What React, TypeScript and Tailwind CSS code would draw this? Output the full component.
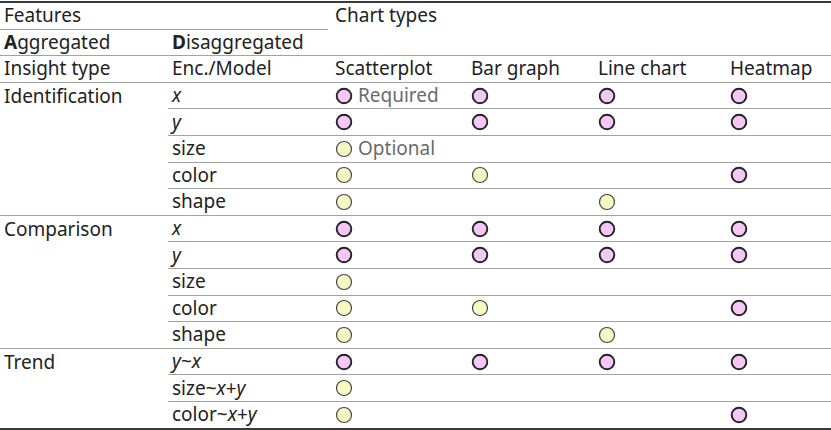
import React from "react";

type Mark = "p" | "y" | "" | "pr" | "yo";

const COLS = "grid grid-cols-[163px_136px_127px_132px_1fr]";

function Dot({ kind }: { kind: "p" | "y" }) {
  const pink = kind === "p";
  return (
    <svg width="18" height="18" viewBox="0 0 18 18" className="shrink-0">
      <circle
        cx="9"
        cy="9"
        r={pink ? 7.3 : 7.5}
        fill={pink ? "#f6c6f6" : "#f7f7c4"}
        stroke={pink ? "#222" : "#444"}
        strokeWidth={pink ? 1.9 : 1.2}
      />
    </svg>
  );
}

function MarkCell({ m }: { m: Mark }) {
  if (!m) return <div className="h-full border-b border-[#a3a3a3]" />;
  const kind = m[0] as "p" | "y";
  return (
    <div className="h-full border-b border-[#a3a3a3] flex items-center pl-[4px] gap-[5px]">
      <Dot kind={kind} />
      {m === "pr" && <span className="text-[#6a6a6a] -mt-[1px]">Required</span>}
      {m === "yo" && <span className="text-[#6a6a6a] -mt-[1px]">Optional</span>}
    </div>
  );
}

type Row = { enc: React.ReactNode; marks: Mark[] };

const I = ({ children }: { children: React.ReactNode }) => <i>{children}</i>;

const groups: { name: string; rows: Row[] }[] = [
  {
    name: "Identification",
    rows: [
      { enc: <I>x</I>, marks: ["pr", "p", "p", "p"] },
      { enc: <I>y</I>, marks: ["p", "p", "p", "p"] },
      { enc: "size", marks: ["yo", "", "", ""] },
      { enc: "color", marks: ["y", "y", "", "p"] },
      { enc: "shape", marks: ["y", "", "y", ""] },
    ],
  },
  {
    name: "Comparison",
    rows: [
      { enc: <I>x</I>, marks: ["p", "p", "p", "p"] },
      { enc: <I>y</I>, marks: ["p", "p", "p", "p"] },
      { enc: "size", marks: ["y", "", "", ""] },
      { enc: "color", marks: ["y", "y", "", "p"] },
      { enc: "shape", marks: ["y", "", "y", ""] },
    ],
  },
  {
    name: "Trend",
    rows: [
      {
        enc: (
          <>
            <I>y</I>~<I>x</I>
          </>
        ),
        marks: ["p", "p", "p", "p"],
      },
      {
        enc: (
          <>
            size~<I>x</I>+<I>y</I>
          </>
        ),
        marks: ["y", "", "", ""],
      },
      {
        enc: (
          <>
            color~<I>x</I>+<I>y</I>
          </>
        ),
        marks: ["y", "", "", "p"],
      },
    ],
  },
];

export default function App() {
  return (
    <div
      className="w-[831px] h-[430px] bg-white text-[#222] text-[19px] leading-none pt-[1px]"
      style={{ fontFamily: "'Noto Sans', sans-serif" }}
    >
      <div className="border-t-2 border-b-2 border-[#3a3a3a]">
        {/* Header row 1 */}
        <div className="flex h-[26.6px]">
          <div className="w-[331px] pr-[3px] h-full">
            <div className="h-full border-b border-[#a3a3a3] flex items-center pl-[4px] pb-[1px]">Features</div>
          </div>
          <div className="flex-1 flex items-center pl-[4px] pb-[1px]">Chart types</div>
        </div>
        {/* Header row 2 */}
        <div className="flex h-[26.6px] border-b border-[#a3a3a3]">
          <div className="w-[168px] flex items-center pl-[4px]">
            <span>
              <b>A</b>ggregated
            </span>
          </div>
          <div className="w-[163px] flex items-center pl-[4px]">
            <span>
              <b>D</b>isaggregated
            </span>
          </div>
        </div>
        {/* Header row 3 */}
        <div className="flex h-[26.6px] border-b border-[#a3a3a3]">
          <div className="w-[168px] flex items-center pl-[4px]">Insight type</div>
          <div className={`flex-1 ${COLS}`}>
            {["Enc./Model", "Scatterplot", "Bar graph", "Line chart", "Heatmap"].map((h) => (
              <div key={h} className="flex items-center pl-[4px]">
                {h}
              </div>
            ))}
          </div>
        </div>
        {groups.map((g, gi) => (
          <div key={g.name} className="flex">
            <div
              className={`w-[168px] pl-[4px] pt-[4px] ${
                gi < groups.length - 1 ? "border-b border-[#a3a3a3]" : ""
              }`}
            >
              {g.name}
            </div>
            <div className="flex-1">
              {g.rows.map((r, ri) => {
                const last = gi === groups.length - 1 && ri === g.rows.length - 1;
                return (
                  <div
                    key={ri}
                    className={`${COLS} ${last ? "h-[25.6px] [&>div]:border-b-0" : "h-[26.6px]"}`}
                  >
                    <div className="h-full border-b border-[#a3a3a3] flex items-center pl-[4px]">
                      <span>{r.enc}</span>
                    </div>
                    {r.marks.map((m, mi) => (
                      <MarkCell key={mi} m={m} />
                    ))}
                  </div>
                );
              })}
            </div>
          </div>
        ))}
      </div>
    </div>
  );
}
